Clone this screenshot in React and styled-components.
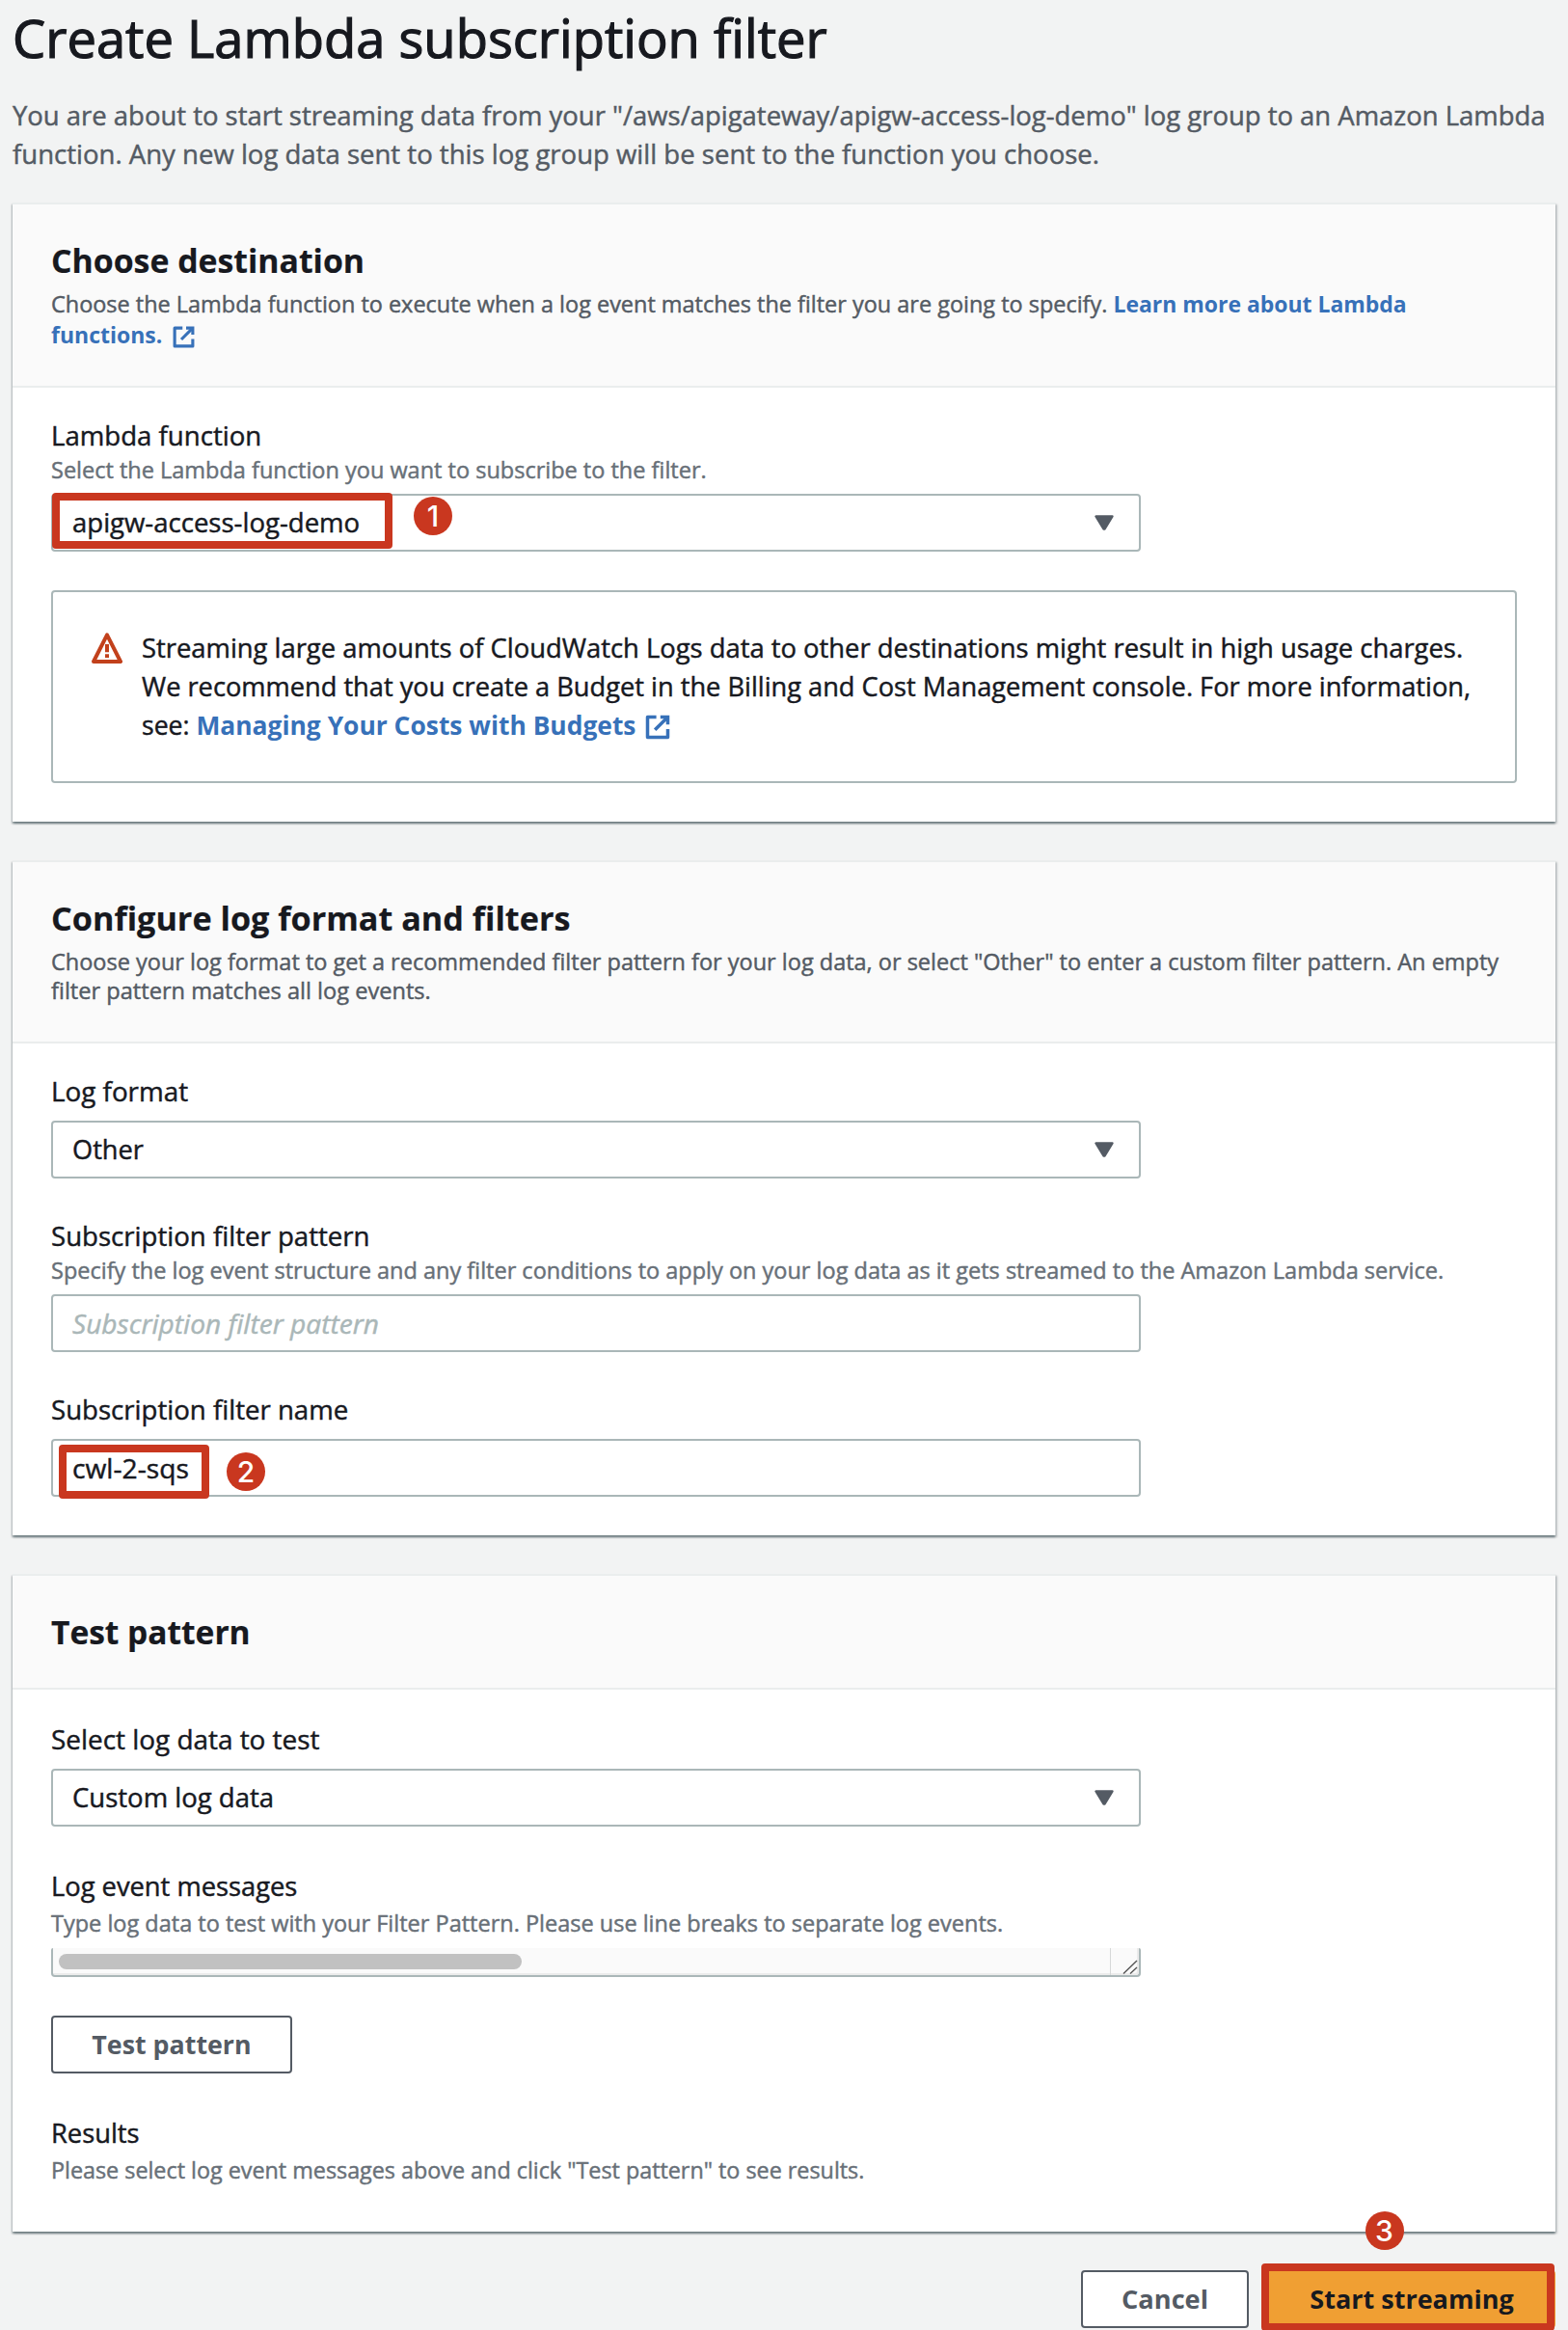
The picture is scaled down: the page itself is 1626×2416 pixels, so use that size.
import React from "react";
import styled, { createGlobalStyle } from "styled-components";

const color = {
  page: "#f2f3f3",
  ink: "#17191f",
  soft: "#545b64",
  hint: "#687078",
  line: "#aab7b8",
  rule: "#eaeded",
  link: "#3771b9",
  mark: "#c9371f",
};

const GlobalStyle = createGlobalStyle`
  * { box-sizing: border-box; }
  body {
    margin: 0;
    background: ${color.page};
    color: ${color.ink};
    font-family: "Open Sans", "Noto Sans", sans-serif;
    -webkit-text-stroke: 0.45px currentColor;
  }
`;

const Page = styled.main`
  display: flex;
  flex-direction: column;
  height: 2416px;
  padding: 0 13px;
  overflow: hidden;
`;

const PageTitle = styled.h1`
  margin: 0;
  font-size: 54.3px;
  line-height: 78px;
  font-weight: 400;
  -webkit-text-stroke-width: 1.2px;
`;

const Intro = styled.p`
  margin: 22px 0 30px;
  font-size: 27.5px;
  line-height: 40px;
  color: ${color.soft};
`;

const Line = styled.span`
  display: block;
  white-space: nowrap;
  font-size: ${(p) => (p.$size ? `${p.$size}px` : "inherit")};
`;

const Card = styled.section`
  display: flex;
  flex-direction: column;
  border-top: 2px solid ${color.rule};
  background: #fff;
  box-shadow: 0 2px 2px 0 rgba(0, 28, 36, 0.4), 2px 2px 2px 0 rgba(0, 28, 36, 0.15),
    -1px 2px 2px 0 rgba(0, 28, 36, 0.15);

  & + & {
    margin-top: 40px;
  }
`;

const CardHeader = styled.header`
  height: ${(p) => p.$height}px;
  padding: 36px 40px 0;
  background: #fafafa;
  border-bottom: 2px solid ${color.rule};
`;

const CardTitle = styled.h2`
  margin: 0;
  font-size: ${(p) => p.$size}px;
  line-height: 44px;
  font-weight: 700;
  -webkit-text-stroke-width: 0.2px;
`;

const CardText = styled.p`
  margin: ${(p) => p.$top}px 0 0;
  font-size: 23.5px;
  line-height: ${(p) => p.$leading}px;
  color: ${color.soft};
`;

const CardBody = styled.div`
  display: flex;
  flex-direction: column;
  align-items: flex-start;
  padding: ${(p) => p.$top || 31}px 40px ${(p) => p.$bottom || 40}px;
`;

const Field = styled.div`
  display: flex;
  flex-direction: column;
  width: 1130px;
  margin-top: ${(p) => p.$gap || 0}px;
`;

const Label = styled.label`
  font-size: ${(p) => p.$size || 27.6}px;
  line-height: 36px;
`;

const Hint = styled.div`
  margin-top: ${(p) => p.$top || 2}px;
  margin-bottom: -4px;
  font-size: ${(p) => p.$size || 23.5}px;
  line-height: 32px;
  white-space: nowrap;
  color: ${color.hint};
`;

const Control = styled.div`
  position: relative;
  display: flex;
  align-items: center;
  justify-content: space-between;
  height: 60px;
  margin-top: 13px;
  padding: 0 26px 0 20px;
  border: 2px solid ${color.line};
  border-radius: 4px;
  background: #fff;
`;

const Value = styled.span`
  font-size: ${(p) => p.$size || 27.5}px;
  line-height: 40px;
`;

const Placeholder = styled(Value)`
  font-style: italic;
  color: ${color.line};
`;

const Link = styled.a`
  color: ${color.link};
  font-size: ${(p) => p.$size}px;
  font-weight: 700;
  -webkit-text-stroke-width: 0;

  svg {
    margin-left: ${(p) => p.$iconGap}px;
    vertical-align: -6px;
  }
`;

const Marker = styled.span`
  position: absolute;
  left: ${(p) => p.$x}px;
  top: ${(p) => p.$y}px;
  width: ${(p) => p.$w}px;
  height: ${(p) => p.$h}px;
  border: 8px solid ${color.mark};
  border-radius: 4px;
`;

const Badge = styled.span`
  position: absolute;
  left: ${(p) => p.$x}px;
  top: ${(p) => p.$y}px;
  display: flex;
  align-items: center;
  justify-content: center;
  width: 40px;
  height: 40px;
  border-radius: 50%;
  background: ${color.mark};
  color: #fff;
  font: 500 30px/40px Inter, sans-serif;
  -webkit-text-stroke-width: 0;
`;

const Alert = styled.div`
  display: flex;
  gap: 20px;
  align-self: stretch;
  height: 200px;
  margin-top: 40px;
  padding: 38px 40px 0;
  border: 2px solid ${color.line};
  border-radius: 4px;

  > svg {
    flex: none;
    margin-top: 4px;
  }
`;

const AlertText = styled.div`
  font-size: 27.3px;
  line-height: 40px;
`;

const TextArea = styled.div`
  display: flex;
  justify-content: space-between;
  height: 30px;
  margin-top: 14px;
  border: solid ${color.line};
  border-width: 0 2px 2px;
  border-radius: 2px 2px 4px 4px;
  background: #fafafa;
  box-shadow: inset -2px -2px 0 #ebebeb;
`;

const Thumb = styled.div`
  width: 480px;
  height: 16px;
  margin: 6px 0 0 6px;
  border-radius: 8px;
  background: #c1c1c1;
`;

const Corner = styled.div`
  width: 30px;
  border-left: 1px solid #d6d8d8;
`;

const Button = styled.button`
  position: relative;
  width: ${(p) => p.$width}px;
  height: 60px;
  padding: 0;
  border: 2px solid ${(p) => (p.$primary ? "#f09f33" : color.soft)};
  border-radius: 4px;
  background: ${(p) => (p.$primary ? "#f09f33" : "#fff")};
  color: ${(p) => (p.$primary ? color.ink : color.soft)};
  font: 700 ${(p) => p.$size}px/40px "Open Sans", sans-serif;
  -webkit-text-stroke-width: 0;
`;

const Footer = styled.footer`
  display: flex;
  justify-content: flex-end;
  gap: 20px;
  margin-top: 40px;
`;

const Caret = () => (
  <svg width="20" height="16" viewBox="0 0 20 16">
    <path d="M1.5 1.5h17L10.6 14.5h-1.2z" fill={color.soft} stroke={color.soft} strokeWidth="2.4" strokeLinejoin="round" />
  </svg>
);

const External = ({ size }) => (
  <svg width={size} height={size} viewBox="0 0 16 16" fill="none" stroke={color.link} strokeWidth="2">
    <path d="M9.6 2H14v4.4" strokeLinecap="butt" />
    <path d="M6.4 9.6 14 2" />
    <path d="M14 9.2V14H2V2h5.2" strokeLinejoin="round" />
  </svg>
);

const Warning = () => (
  <svg width="32" height="32" viewBox="0 0 16 16" fill="none" stroke="#c2411c" strokeWidth="2">
    <path d="M8 1.2 15 15H1z" strokeLinejoin="round" />
    <path d="M8 6v4.1M8 11.1v1.9" />
  </svg>
);

const Grip = () => (
  <svg width="29" height="28" viewBox="0 0 29 28" stroke="#555" strokeWidth="1.4">
    <path d="M13 26.5 27 13M20 26.5 27 20" />
  </svg>
);

export default function App() {
  return (
    <Page>
      <GlobalStyle />
      <PageTitle>Create Lambda subscription filter</PageTitle>
      <Intro>
        <Line $size={27.46}>You are about to start streaming data from your "/aws/apigateway/apigw-access-log-demo" log group to an Amazon Lambda</Line>
        <Line $size={27.54}>function. Any new log data sent to this log group will be sent to the function you choose.</Line>
      </Intro>

      <Card>
        <CardHeader $height={190}>
          <CardTitle $size={33.8}>Choose destination</CardTitle>
          <CardText $top={7} $leading={32}>
            <Line $size={23.46}>
              Choose the Lambda function to execute when a log event matches the filter you are going to specify.{" "}
              <Link $size={22.95}>Learn more about Lambda</Link>
            </Line>
            <Line>
              <Link $size={23} $iconGap={10}>
                functions.
                <External size={25} />
              </Link>
            </Line>
          </CardText>
        </CardHeader>
        <CardBody>
          <Field>
            <Label>Lambda function</Label>
            <Hint>Select the Lambda function you want to subscribe to the filter.</Hint>
            <Control>
              <Value $size={27.54}>apigw-access-log-demo</Value>
              <Caret />
              <Marker $x={-1} $y={-3} $w={353} $h={58} />
              <Badge $x={374} $y={1}>1</Badge>
            </Control>
          </Field>
          <Alert>
            <Warning />
            <AlertText>
              <Line $size={27.38}>Streaming large amounts of CloudWatch Logs data to other destinations might result in high usage charges.</Line>
              <Line $size={27.22}>We recommend that you create a Budget in the Billing and Cost Management console. For more information,</Line>
              <Line $size={26.6}>
                see:{" "}
                <Link $size={26.4} $iconGap={9}>
                  Managing Your Costs with Budgets
                  <External size={28} />
                </Link>
              </Line>
            </AlertText>
          </Alert>
        </CardBody>
      </Card>

      <Card>
        <CardHeader $height={188}>
          <CardTitle $size={34.2}>Configure log format and filters</CardTitle>
          <CardText $top={8} $leading={30}>
            <Line>Choose your log format to get a recommended filter pattern for your log data, or select "Other" to enter a custom filter pattern. An empty</Line>
            <Line $size={23.6}>filter pattern matches all log events.</Line>
          </CardText>
        </CardHeader>
        <CardBody>
          <Field>
            <Label $size={27.8}>Log format</Label>
            <Control>
              <Value $size={27.2}>Other</Value>
              <Caret />
            </Control>
          </Field>
          <Field $gap={41}>
            <Label>Subscription filter pattern</Label>
            <Hint>Specify the log event structure and any filter conditions to apply on your log data as it gets streamed to the Amazon Lambda service.</Hint>
            <Control>
              <Placeholder $size={28.1}>Subscription filter pattern</Placeholder>
            </Control>
          </Field>
          <Field $gap={41}>
            <Label>Subscription filter name</Label>
            <Control>
              <Value $size={28.2}>cwl-2-sqs</Value>
              <Marker $x={6} $y={4} $w={156} $h={56} />
              <Badge $x={180} $y={12}>2</Badge>
            </Control>
          </Field>
        </CardBody>
      </Card>

      <Card>
        <CardHeader $height={118}>
          <CardTitle $size={33.5}>Test pattern</CardTitle>
        </CardHeader>
        <CardBody $top={33} $bottom={52}>
          <Field>
            <Label $size={27.9}>Select log data to test</Label>
            <Control>
              <Value>Custom log data</Value>
              <Caret />
            </Control>
          </Field>
          <Field $gap={44}>
            <Label $size={27.3}>Log event messages</Label>
            <Hint $top={4}>Type log data to test with your Filter Pattern. Please use line breaks to separate log events.</Hint>
            <TextArea>
              <Thumb />
              <Corner>
                <Grip />
              </Corner>
            </TextArea>
          </Field>
          <Field $gap={40}>
            <Button $width={250} $size={26.8}>Test pattern</Button>
          </Field>
          <Field $gap={44}>
            <Label $size={27.3}>Results</Label>
            <Hint $top={4} $size={23.34}>Please select log event messages above and click "Test pattern" to see results.</Hint>
          </Field>
        </CardBody>
      </Card>

      <Footer>
        <Button $width={174} $size={27.2}>Cancel</Button>
        <Button $width={298} $size={27} $primary>
          Start streaming
          <Marker $x={-9} $y={-9} $w={304} $h={70} />
          <Badge $x={98.5} $y={-63}>3</Badge>
        </Button>
      </Footer>
    </Page>
  );
}
